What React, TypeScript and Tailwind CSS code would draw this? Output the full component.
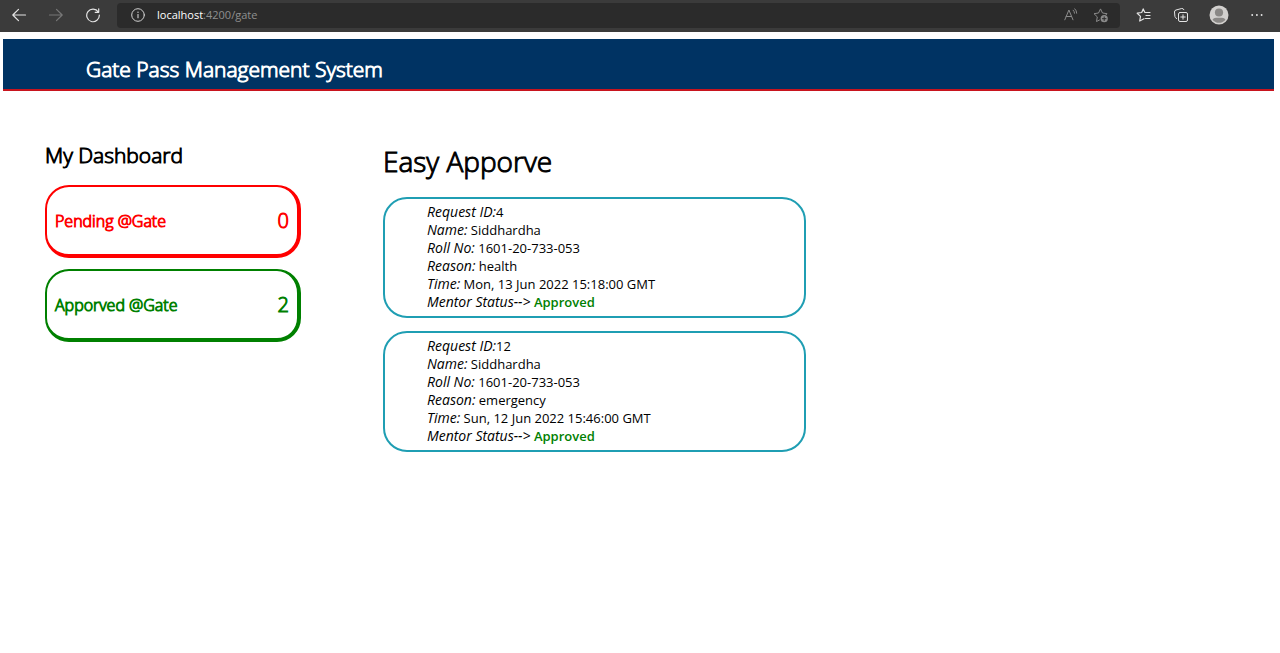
import type { ReactNode } from 'react';

type GateRequest = {
  id: number;
  name: string;
  roll: string;
  reason: string;
  time: string;
  status: string;
};

const requests: GateRequest[] = [
  { id: 4, name: 'Siddhardha', roll: '1601-20-733-053', reason: 'health', time: 'Mon, 13 Jun 2022 15:18:00 GMT', status: 'Approved' },
  { id: 12, name: 'Siddhardha', roll: '1601-20-733-053', reason: 'emergency', time: 'Sun, 12 Jun 2022 15:46:00 GMT', status: 'Approved' },
];

function Icon({ label, className, children }: { label: string; className: string; children: ReactNode }) {
  return (
    <button type="button" aria-label={label} className={`flex shrink-0 items-center justify-center ${className}`}>
      <svg width="16" height="16" viewBox="0 0 16 16" fill="none" stroke="currentColor" strokeLinecap="round" strokeLinejoin="round">
        {children}
      </svg>
    </button>
  );
}

function BrowserBar() {
  return (
    <div className="flex h-8 items-center bg-[#3b3b3b] pr-[15px] pb-[2px] pl-[11px] text-[#e4e4e4]">
      <Icon label="Back" className="mr-[21px]">
        <path d="M14.5 8H2M7.5 2.3 1.8 8l5.700 5.700" strokeWidth="1.200" />
      </Icon>
      <Icon label="Forward" className="mr-[21px] text-[#777777]">
        <path d="M1.500 8H14M8.500 2.300 14.200 8l-5.700 5.700" strokeWidth="1.200" />
      </Icon>
      <Icon label="Refresh" className="mr-4">
        <path d="M13.300 5A6.300 6.300 0 1 0 14.300 8M13.700 1.800V5.300H10.200" strokeWidth="1.200" />
      </Icon>
      <div className="flex h-[25px] grow items-center rounded-sm bg-[#2b2b2b] pr-[11px] pl-[13px]">
        <Icon label="Site information" className="mr-[11px] text-[#d2d2d2]">
          <circle cx="8" cy="8" r="6.300" />
          <path d="M8 7.500v3.200" strokeWidth="1.100" />
          <circle cx="8" cy="5.200" r="0.700" fill="currentColor" stroke="none" />
        </Icon>
        <div className="grow text-[11px] font-normal text-[#8f8f8f]">
          <span className="text-white">localhost</span>:4200/gate
        </div>
        <Icon label="Read aloud" className="mr-[14px] text-[#8b8b8b]">
          <path d="M1.800 12.800 5.900 3l4.100 9.800M3.200 9.500h5.400M10.200 3.200q1.300 1.200 1.300 3M11.800 1.800q1.900 1.700 1.900 4.400" />
        </Icon>
        <Icon label="Add to favorites" className="text-[#8b8b8b]">
          <path d="M6.500 13 3.500 14.500 4.300 9.900 1 6.700 5.500 6 7.500 1.900 9.500 6 14 6.700 13 7.800" />
          <circle cx="11.200" cy="11.700" r="3.600" fill="currentColor" stroke="none" />
          <path d="M11.200 9.900v3.600M9.400 11.700H13" stroke="#2b2b2b" />
        </Icon>
      </div>
      <Icon label="Favorites" className="mr-[21px] ml-4">
        <path d="M8 11.700 3.700 14 4.500 9.400 1.200 6.200 5.700 5.500 7.200 1.900 8.900 5.500H14M10 8.500h4M9.500 11.500H14" strokeWidth="1.200" />
      </Icon>
      <Icon label="Collections" className="mr-5">
        <rect x="5.500" y="5.500" width="9" height="9" rx="1.500" />
        <path d="M10 7.800v4.400M7.800 10h4.400M3.700 11.500 2.900 11A2 2 0 0 1 1.900 9.400L1.500 5A2 2 0 0 1 3 3L8.700 1.500a2 2 0 0 1 2.200 1.200" />
      </Icon>
      <button type="button" aria-label="Profile" className="mr-5 shrink-0">
        <svg width="20" height="20" viewBox="0 0 20 20">
          <circle cx="10" cy="10" r="9.500" fill="#d2d0ce" />
          <circle cx="10" cy="7.500" r="4.100" fill="#8a8886" />
          <path d="M3.500 14.700Q4.500 12.700 7 12.700H13Q15.500 12.700 16.500 14.700A8.300 8.300 0 0 1 3.500 14.700Z" fill="#8a8886" />
        </svg>
      </button>
      <Icon label="More" className="">
        <path d="M3.200 8h.01M7.900 8h.01M12.600 8h.01" strokeWidth="1.900" />
      </Icon>
    </div>
  );
}

function CountCard({ label, count, className }: { label: string; count: number; className: string }) {
  return (
    <div className={`flex h-[73px] items-center justify-between rounded-3xl border-2 border-r-4 border-b-4 px-2 [-webkit-text-stroke:1px] ${className}`}>
      <span className="text-base">{label}</span>
      <span className="text-xl">{count}</span>
    </div>
  );
}

function Field({ label, children }: { label: string; children: ReactNode }) {
  return (
    <p className="leading-[18px]">
      <i className="text-sm leading-[18px]">{label}</i>
      {children}
    </p>
  );
}

function RequestCard({ request }: { request: GateRequest }) {
  return (
    <article className="rounded-3xl border-2 border-[#1f9eb3] pt-1 pb-[5px] pl-[42px] text-[13px] font-normal">
      <Field label="Request ID:">{request.id}</Field>
      <Field label="Name:"> {request.name}</Field>
      <Field label="Roll No:"> {request.roll}</Field>
      <Field label="Reason:"> {request.reason}</Field>
      <Field label="Time:"> {request.time}</Field>
      <Field label="Mentor Status-->"> <b className="font-semibold text-[#008000]">{request.status}</b></Field>
    </article>
  );
}

export default function App() {
  return (
    <div className="min-h-screen bg-white font-['Open_Sans',sans-serif] font-light text-black">
      <BrowserBar />
      <header className="mt-[7px] mr-[6px] ml-[3px] border-b-2 border-[#c8141e] bg-[#003363] pt-[15px] pb-[5px] pl-[83px]">
        <h1 className="text-[21px] leading-[30px] font-light text-white [-webkit-text-stroke:1px]">Gate Pass Management System</h1>
      </header>
      <main className="flex gap-[82px] px-[45px] pt-[49px]">
        <section className="w-64 shrink-0">
          <h2 className="text-[21px] leading-[30px] font-light [-webkit-text-stroke:1px]">My Dashboard</h2>
          <div className="mt-[15px] flex flex-col gap-[11px]">
            <CountCard label="Pending @Gate" count={0} className="border-[#ff0000] text-[#ff0000]" />
            <CountCard label="Apporved @Gate" count={2} className="border-[#008000] text-[#008000]" />
          </div>
        </section>
        <section className="w-full max-w-[423px]">
          <h2 className="mt-px text-[28px] leading-10 font-light [-webkit-text-stroke:1px]">Easy Apporve</h2>
          <div className="mt-4 flex flex-col gap-[13px]">
            {requests.map((request) => (
              <RequestCard key={request.id} request={request} />
            ))}
          </div>
        </section>
      </main>
    </div>
  );
}
